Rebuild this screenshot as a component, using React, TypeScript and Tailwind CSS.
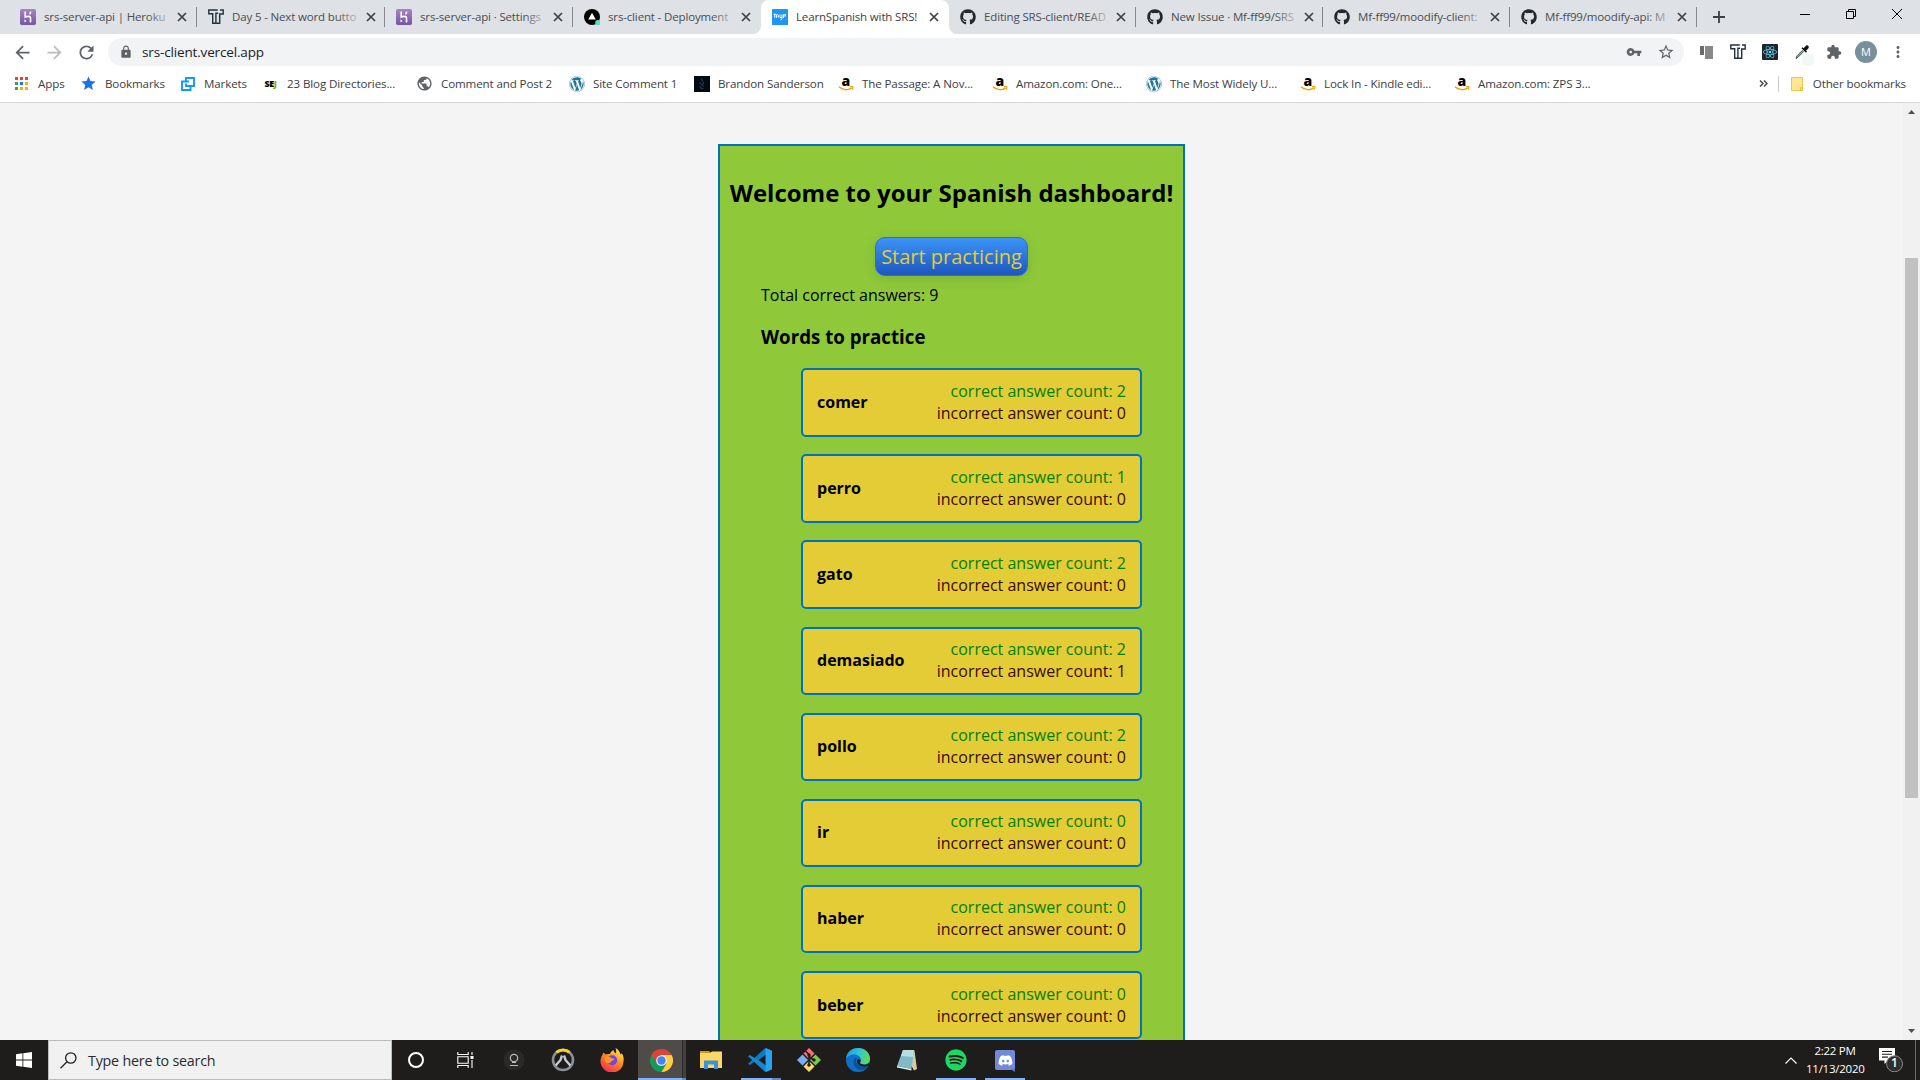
import React from "react";
import { FaGithub, FaWordpress, FaReact, FaSpotify, FaDiscord } from "react-icons/fa";
import {
  MdArrowBack,
  MdArrowForward,
  MdRefresh,
  MdLock,
  MdVpnKey,
  MdStarBorder,
  MdExtension,
  MdMoreVert,
  MdPublic,
  MdStar,
} from "react-icons/md";

/* ---------- small icons ---------- */

const Heroku = () => (
  <svg viewBox="0 0 16 16" className="size-4">
    <defs>
      <linearGradient id="hk" x1="0" y1="0" x2="0" y2="1">
        <stop offset="0" stopColor="#a585c4" />
        <stop offset="1" stopColor="#7a53a3" />
      </linearGradient>
    </defs>
    <rect width="16" height="16" rx="1.8" fill="url(#hk)" />
    <path d="M5.2 2.5v5.6c1.8-.8 5.3-1.5 5.3 1v4.4M10.6 2.6c0 1-.4 1.900-1 2.600" fill="none" stroke="#fff" strokeWidth="1.6" />
    <path d="M4.500 10.200l2 1.700-2 1.700z" fill="#fff" />
  </svg>
);

const Thinkful = () => (
  <svg viewBox="0 0 16 16" className="size-4" fill="none" stroke="#25303f" strokeWidth="1.400">
    <path d="M9.800 1H.8v3.800h3.900v9.500h3.200V4.200h2.200" />
    <path d="M12 1h3.200v4h-3.500v9.300H7.500" />
  </svg>
);

const Vercel = () => (
  <svg viewBox="0 0 16 16" className="size-4">
    <circle cx="8" cy="8" r="8" fill="#000" />
    <path d="M8 3.700l3.800 6.700H4.200z" fill="#fff" />
    <circle cx="13.800" cy="13.700" r="2.600" fill="#50e3c2" />
  </svg>
);

const Npr = () => (
  <svg viewBox="0 0 16 16" className="size-4">
    <rect width="16" height="16" rx=".6" fill="#2196f0" />
    <path d="M1.500 5.300h2.700M2.800 5.300v3.500M4.500 8.800V5.800c1-.8 1.800 0 1.800.8v2M8 5.500v3h1.800M10 5.500v4.300L8.500 11M11.500 9V5.500M11.500 5.800h2.700M13 5.800v2" fill="none" stroke="#fff" strokeWidth="1" />
  </svg>
);

const Close = () => (
  <svg viewBox="0 0 10 10" className="size-[10px] shrink-0" stroke="#3c4043" strokeWidth="1.700">
    <path d="M1 1l8 8M9 1l-8 8" />
  </svg>
);

const Git = () => <FaGithub className="size-4 text-[#24292e]" />;

/* ---------- tab strip ---------- */

type TabProps = { icon: React.ReactNode; title: string; active?: boolean; sep?: boolean; w?: string };

function Tab({ icon, title, active, sep, w = "w-[188px]" }: TabProps) {
  return (
    <div
      className={
        "relative flex h-[34px] shrink-0 items-center pl-[11px] pr-[10px] " + w + (active ? " rounded-t-lg bg-white" : "")
      }
    >
      <span className="shrink-0">{icon}</span>
      <span className="relative ml-2 h-5 flex-1">
        <span
          className={
            "block whitespace-nowrap text-[11.500px] leading-5 tracking-[-0.15px]" +
            (active ? " text-[#3c4043]" : " text-[#4a4d51]")
          }
        >
          {title}
        </span>
        {!active && <span className="absolute inset-y-0 -right-2 w-7 bg-gradient-to-r from-[#dee1e6]/0 to-[#dee1e6]" />}
      </span>
      <span className="ml-[10px]">
        <Close />
      </span>
      {sep && <span className="absolute right-0 top-[7px] h-5 w-px bg-[#85888c]" />}
      {active && (
        <>
          <svg viewBox="0 0 8 8" className="absolute -left-2 bottom-0 size-2" fill="#fff">
            <path d="M8 0v8H0a8 8 0 0 0 8-8z" />
          </svg>
          <svg viewBox="0 0 8 8" className="absolute -right-2 bottom-0 size-2" fill="#fff">
            <path d="M0 0v8h8a8 8 0 0 1-8-8z" />
          </svg>
        </>
      )}
    </div>
  );
}

function TabStrip() {
  return (
    <div className="flex h-[34px] bg-[#dee1e6]">
      <div className="ml-[9px] flex w-[1688px]">
        <Tab icon={<Heroku />} title="srs-server-api | Heroku" sep />
        <Tab icon={<Thinkful />} title="Day 5 - Next word butto" sep />
        <Tab icon={<Heroku />} title="srs-server-api · Settings" sep />
        <Tab icon={<Vercel />} title="srs-client - Deployment" />
        <Tab icon={<Npr />} title="LearnSpanish with SRS!" active />
        <Tab icon={<Git />} title="Editing SRS-client/READ" sep w="w-[187px]" />
        <Tab icon={<Git />} title="New Issue · Mf-ff99/SRS" sep w="w-[187px]" />
        <Tab icon={<Git />} title="Mf-ff99/moodify-client:" sep w="w-[187px]" />
        <Tab icon={<Git />} title="Mf-ff99/moodify-api: M" sep w="w-[187px]" />
      </div>
      <div className="flex flex-1 items-center justify-between pl-4 pr-[18px]">
        <svg viewBox="0 0 12 12" className="size-3" stroke="#3c4043" strokeWidth="1.800">
          <path d="M6 0v12M0 6h12" />
        </svg>
        <div className="mb-[6px] flex gap-9">
          <svg viewBox="0 0 10 10" className="size-[10px]" stroke="#000" strokeWidth="1">
            <path d="M0 5.500h10" />
          </svg>
          <svg viewBox="0 0 10 10" className="size-[10px]" stroke="#000" fill="none" strokeWidth="1">
            <path d="M.5 2.500h7v7h-7zM2.500 2.500v-2h7v7h-2" />
          </svg>
          <svg viewBox="0 0 10 10" className="size-[10px]" stroke="#000" strokeWidth="1">
            <path d="M0 0l10 10M10 0L0 10" />
          </svg>
        </div>
      </div>
    </div>
  );
}

/* ---------- toolbar ---------- */

const Slot = ({ children }: { children: React.ReactNode }) => (
  <span className="flex w-8 items-center justify-center">{children}</span>
);

function Toolbar() {
  return (
    <div className="flex h-9 items-center bg-white pl-[6px] pr-[6px] text-[#5f6368]">
      <Slot><MdArrowBack className="size-[21px]" /></Slot>
      <Slot><MdArrowForward className="size-[21px] text-[#babcbe]" /></Slot>
      <Slot><MdRefresh className="size-[21px]" /></Slot>
      <div className="ml-[6px] flex h-7 w-[1576px] items-center rounded-full bg-[#f1f3f4] pl-[11px] pr-[9px]">
        <MdLock className="size-[14px]" />
        <span className="ml-[9px] flex-1 text-[13.500px] tracking-[-0.15px] text-[#202124]">srs-client.vercel.app</span>
        <MdVpnKey className="mr-[15px] size-4" />
        <MdStarBorder className="size-[18px]" />
      </div>
      <div className="ml-[6px] flex items-center">
        <Slot>
          <span className="flex gap-px">
            <span className="h-[9px] w-1 bg-[#6b6b6b]" />
            <span className="h-[13px] w-2 bg-[#888]" />
          </span>
        </Slot>
        <Slot><Thinkful /></Slot>
        <Slot>
          <span className="flex size-4 items-center justify-center rounded-[1px] bg-[#20232a]">
            <FaReact className="size-[14px] text-[#61dafb]" />
          </span>
        </Slot>
        <Slot>
          <span className="relative">
            <svg viewBox="0 0 16 16" className="size-4">
              <path d="M2 14.500l.8-2.500L8.500 6.300l1.200 1.200L4 13.300z" fill="#8fa896" stroke="#2f4a38" strokeWidth=".8" />
              <path d="M7.500 4.200l4.500 4.500 1-1-1-1 2.500-2.500c1.200-1.500-1-3.700-2.500-2.500L9.500 4.200l-1-1z" fill="#111" />
            </svg>
            <span className="absolute -bottom-[6px] -right-1 size-3 rounded-sm bg-[#eff5f5]/80" />
          </span>
        </Slot>
        <Slot><MdExtension className="size-4" /></Slot>
        <Slot>
          <span className="flex size-[22px] items-center justify-center rounded-full bg-[#78909c] text-[11px] text-white">M</span>
        </Slot>
        <Slot><MdMoreVert className="size-[18px]" /></Slot>
      </div>
    </div>
  );
}

/* ---------- bookmarks ---------- */

const Amazon = () => (
  <svg viewBox="0 0 16 16" className="size-4">
    <text x="3.500" y="9.800" fontSize="14" fontWeight="800" fontFamily="Open Sans, sans-serif" fill="#000">a</text>
    <path d="M1 10.800c4 3.600 9 3.600 12.500 1" fill="none" stroke="#ff9900" strokeWidth="1.500" />
    <path d="M11.800 10.600l3.200-.1-.6 3" fill="none" stroke="#ff9900" strokeWidth="1" />
  </svg>
);
const Wp = () => <FaWordpress className="size-4 text-[#21759b]" />;

const AppsGrid = () => (
  <svg viewBox="0 0 13 13" className="size-[13px]">
    {["#ea4335", "#ea4335", "#ea4335", "#34a853", "#1a73e8", "#fbaf00", "#34a853", "#fbaf00", "#fbaf00"].map((c, i) => (
      <rect key={i} x={(i % 3) * 5} y={Math.floor(i / 3) * 5} width="3" height="3" fill={c} />
    ))}
  </svg>
);
const Markets = () => (
  <svg viewBox="0 0 14 14" className="size-[14px]" fill="none" stroke="#1199fa" strokeWidth="1.900">
    <path d="M8 4.500H1v8.500h8.500V8.500M5 4.500V1h8v8H5V6.500" />
  </svg>
);
const Sej = () => (
  <span className="text-[9px] font-extrabold leading-4 tracking-[-0.4px] text-black">
    SE<span className="text-[#6cb518]">J</span>
  </span>
);
const Brandon = () => (
  <svg viewBox="0 0 16 16" className="size-4">
    <rect width="16" height="16" fill="#020a14" />
    <path d="M8 2.500c-2 2.500 2.500 3 1.500 5.500M6 6c-1 2 3.500 2.500 3.500 4.500M6 10c0 2 2 3 3.500 2" fill="none" stroke="#2a3444" strokeWidth="1.300" />
  </svg>
);

const bookmarks: [React.ReactNode, string, string][] = [
  [<AppsGrid />, "Apps", "w-[67px]"],
  [<MdStar className="size-[17px] text-[#1a73e8]" />, "Bookmarks", "w-[99px]"],
  [<Markets />, "Markets", "w-[83px]"],
  [<Sej />, "23 Blog Directories...", "w-[154px]"],
  [<MdPublic className="size-[17px] text-[#5f6368]" />, "Comment and Post 2", "w-[152px]"],
  [<Wp />, "Site Comment 1", "w-[125px]"],
  [<Brandon />, "Brandon Sanderson", "w-[144px]"],
  [<Amazon />, "The Passage: A Nov...", "w-[154px]"],
  [<Amazon />, "Amazon.com: One...", "w-[154px]"],
  [<Wp />, "The Most Widely U...", "w-[154px]"],
  [<Amazon />, "Lock In - Kindle edi...", "w-[154px]"],
  [<Amazon />, "Amazon.com: ZPS 3...", "w-[154px]"],
];

function BookmarkBar() {
  return (
    <div className="flex h-[33px] items-center border-b border-[#d9dadc] bg-white pb-1 pl-[13px] pr-[14px] text-[11.600px] tracking-[-0.13px] text-[#3c4043]">
      {bookmarks.map(([icon, label, w]) => (
        <div key={label} className={"flex shrink-0 items-center whitespace-nowrap " + w}>
          <span className="flex w-[17px] items-center justify-center">{icon}</span>
          <span className="ml-2">{label}</span>
        </div>
      ))}
      <div className="flex flex-1 items-center justify-end whitespace-nowrap">
        <svg viewBox="0 0 9 7" className="size-[9px]" fill="none" stroke="#4a4d51" strokeWidth="1.500">
          <path d="M1 .5l3 3-3 3M5 .5l3 3-3 3" />
        </svg>
        <span className="ml-[10px] h-4 w-px bg-[#c8c9cb]" />
        <svg viewBox="0 0 12 14" className="ml-3 h-[14px] w-3">
          <path d="M.5.5h11v13H.5z" fill="#ffe694" stroke="#edc94f" />
          <path d="M9.500 10.500h2v3h-2z" fill="#ffe694" stroke="#e9bf3a" />
        </svg>
        <span className="ml-[10px]">Other bookmarks</span>
      </div>
    </div>
  );
}

/* ---------- page ---------- */

const words: [string, number, number][] = [
  ["comer", 2, 0],
  ["perro", 1, 0],
  ["gato", 2, 0],
  ["demasiado", 2, 1],
  ["pollo", 2, 0],
  ["ir", 0, 0],
  ["haber", 0, 0],
  ["beber", 0, 0],
];

function Page() {
  return (
    <div className="flex h-[937px] overflow-hidden bg-[#f4f4f4]">
      <main className="flex flex-1 justify-center overflow-hidden pt-[41px]">
        <section className="h-[1000px] w-[467px] shrink-0 border-2 border-[#0071bc] bg-[#8fc93a] px-2 pt-[30px] text-black">
          <h2 className="whitespace-nowrap text-center text-2xl font-bold leading-[33px]">Welcome to your Spanish dashboard!</h2>
          <div className="mt-7 flex justify-center">
            <button className="h-[39px] w-[153px] whitespace-nowrap rounded-[10px] border border-[#2a6bd4] bg-linear-to-b from-[#3d94f6] to-[#1e57c0] text-[20px] leading-none text-[#e4cc37] shadow-[0_3px_12px_rgba(60,90,20,0.2)]">
              Start practicing
            </button>
          </div>
          <p className="ml-[33px] mt-2 text-base leading-[22px]">Total correct answers: 9</p>
          <h3 className="ml-[33px] mt-[18px] text-[18.720px] font-bold leading-[26px]">Words to practice</h3>
          <ul className="ml-[73px] mt-[18.300px] flex w-[341px] flex-col gap-[17.700px]">
            {words.map(([w, c, i]) => (
              <li
                key={w}
                className="flex h-[68.400px] items-center justify-between rounded-[5px] border-2 border-[#0071bc] bg-[#e4cc37] px-[14px]"
              >
                <b className="-mt-px text-base leading-[22px]">{w}</b>
                <div className="-mt-px text-right text-base leading-[22px]">
                  <p className="text-[#008000]">correct answer count: {c}</p>
                  <p className="text-[#3b0a0a]">incorrect answer count: {i}</p>
                </div>
              </li>
            ))}
          </ul>
        </section>
      </main>
      <div className="flex w-[17px] flex-col items-center bg-[#f1f1f1]">
        <svg viewBox="0 0 7 4" className="mt-[7px] h-1 w-[7px]" fill="#505050"><path d="M0 4l3.500-4L7 4z" /></svg>
        <div className="mt-[144px] h-[540px] w-[13px] bg-[#c1c1c1]" />
        <svg viewBox="0 0 7 4" className="mb-[7px] mt-auto h-1 w-[7px]" fill="#505050"><path d="M0 0l3.500 4L7 0z" /></svg>
      </div>
    </div>
  );
}

/* ---------- taskbar ---------- */

const Firefox = () => (
  <svg viewBox="0 0 24 24" className="size-6">
    <defs>
      <linearGradient id="ff" x1=".8" y1="0" x2=".2" y2="1">
        <stop offset="0" stopColor="#fff04f" />
        <stop offset=".45" stopColor="#ff8a1e" />
        <stop offset="1" stopColor="#f0245e" />
      </linearGradient>
    </defs>
    <path d="M3 4.500C4.300 5 5 6 5.500 6.500 7 5.800 8.500 5.800 9.800 6 10.700 4 12 2.800 13.500 2c0 1.500 1 2.500 2.500 3.500.4-2 .2-3.800-.5-5.500 3 1.500 4.500 4 5 6.500.8-.2 1-.8 1.200-1.500C23.500 8 24 10.500 23.500 13.500A11.500 11.500 0 1 1 1.500 8.500C2.300 7.300 3 6.500 3 4.500z" fill="url(#ff)" />
    <circle cx="12.200" cy="12.300" r="5" fill="#7542e5" />
    <path d="M4.500 9.500c3-2 5.500-.5 7.500 1l2.500.2c-.5 2-3 1.600-3.500 3.300-1 1.500-5 1.500-5.500-.5z" fill="#ff9a1e" />
  </svg>
);

const Chrome = () => (
  <svg viewBox="0 0 24 24" className="size-[23px]">
    <path d="M12 12L1.600 6A12 12 0 0 0 12 24l5.200-9z" fill="#0f9d58" />
    <path d="M12 12l5.200 3L12 24A12 12 0 0 0 22.400 6H12z" fill="#ffcd40" />
    <path d="M12 6h10.400A12 12 0 0 0 1.600 6l5.200 9z" fill="#db4437" />
    <circle cx="12" cy="12" r="5.600" fill="#f1f1f1" />
    <circle cx="12" cy="12" r="4.400" fill="#4285f4" />
  </svg>
);

const Overwatch = () => (
  <svg viewBox="0 0 24 24" className="size-6" fill="none">
    <circle cx="12" cy="12" r="10" stroke="#8b9197" strokeWidth="2.600" />
    <path d="M5.500 4.400a10 10 0 0 1 13 0" stroke="#f7d518" strokeWidth="3" />
    <path d="M11 7.500L9.500 12l-4.800 5.500M13 7.500l1.500 4.500 4.800 5.500" stroke="#c9ccd0" strokeWidth="2.400" />
  </svg>
);

const Folder = () => (
  <svg viewBox="0 0 22 20" className="h-5 w-[22px]">
    <path d="M0 1h9l2 2h-11z" fill="#d8980c" />
    <path d="M0 3h10l2-1.500h10V18H0z" fill="#fdd667" />
    <path d="M4 19v-8.500h14V19h-4v-4.500H8V19z" fill="#3a93d8" />
  </svg>
);

const VsCode = () => (
  <svg viewBox="0 0 24 24" className="size-6">
    <path d="M17.500 0L24 2.800v18.400L17.500 24 6.500 13.500 2 17 0 15.800 14 3z" fill="#0b7cc4" />
    <path d="M2 7l-2 1.200L17.500 24V17z" fill="#1489d3" />
    <path d="M17.500 0L24 2.800v18.400L17.500 24z" fill="#27a3f0" />
    <path d="M17.500 6.800v10.400L10.600 12zM0 9.800v4.400L2.300 12z" fill="#201e1b" />
  </svg>
);

const GitBash = () => (
  <svg viewBox="0 0 24 24" className="size-6">
    <path d="M12 0l5.500 5.500L12 11 6.500 5.500z" fill="#f4716f" />
    <path d="M18.500 6.500L24 12l-5.500 5.500L13 12z" fill="#7ec850" />
    <path d="M12 13l5.500 5.500L12 24l-5.500-5.500z" fill="#fbdc6b" />
    <path d="M5.500 6.500L11 12l-5.500 5.500L0 12z" fill="#79aef6" />
    <path d="M8.500 3L12 6.500v11M12 8.500l4.500 3.500" fill="none" stroke="#211f1c" strokeWidth="1.600" />
    <circle cx="12" cy="7" r="1.700" fill="#211f1c" />
    <circle cx="12" cy="17" r="1.800" fill="#211f1c" />
    <circle cx="17" cy="12" r="1.700" fill="#211f1c" />
  </svg>
);

const Edge = () => (
  <svg viewBox="0 0 24 24" className="size-6">
    <defs>
      <linearGradient id="eg" x1="0" y1=".3" x2="1" y2=".5">
        <stop offset="0" stopColor="#1b9de2" />
        <stop offset=".5" stopColor="#2fc4d8" />
        <stop offset="1" stopColor="#62dc54" />
      </linearGradient>
    </defs>
    <circle cx="12" cy="12" r="12" fill="#1170c4" />
    <path d="M0 11C.5 4.500 5.500 0 12 0c7 0 12 5 12 10.500 0 4-3 6-6 6-2.500 0-4.500-.8-4-2 .6-.8 1-1.600 1-2.500C15 9 12 6.500 8.500 6.500 4.500 6.500 1 8.500 0 11z" fill="url(#eg)" />
    <path d="M9 10c-3 3.500-1.500 10.500 5 12 3 .5 6.500-1.500 8-4-5 2.500-12 0-12-5 0-1 .3-2 .8-2.800z" fill="#0c4f9c" />
    <path d="M13.800 14.600c-.2 1.500 5.500 3.500 9.300.4l.9 1.500-2 1.600c-5 2-11-.5-11-4.500 0-1 .5-2 1.300-2.500 1 .3 2.700 1 2.500 1.800z" fill="#201e1b" />
  </svg>
);

const Notepad = () => (
  <svg viewBox="0 0 24 24" className="size-6">
    <path d="M7.500 2l12 .5L22 21l-3 1.500z" fill="#d6c9a8" />
    <path d="M8 2h11l-2.500 19L2 18z" fill="#7fbac6" />
    <path d="M8 2h11l-1 7-12-1z" fill="#b8dde3" />
    <path d="M2 18l14.500 3-.2 1.500L2 19.500z" fill="#eef4f5" />
  </svg>
);

type TaskProps = { children: React.ReactNode; bar?: string; second?: string; active?: boolean };
function Task({ children, bar, second, active }: TaskProps) {
  return (
    <div className={"relative mr-px flex h-10 w-12 items-center justify-center " + (active ? "bg-[#4e4b48]" : "")}>
      {children}
      {active && <span className="absolute inset-y-0 right-0 w-1 border-l border-[#2b2a28] bg-[#43413f]" />}
      {bar && <span className={"absolute bottom-0 h-0.5 bg-[#7ab5f9] " + bar} />}
      {second && <span className={"absolute bottom-0 h-0.5 bg-[#5f8cbf] " + second} />}
    </div>
  );
}

function Taskbar() {
  return (
    <div className="flex h-10 bg-[#1f1d1b] text-white">
      <div className="flex w-12 items-center justify-center">
        <svg viewBox="0 0 16 16" className="size-4" fill="#fff">
          <path d="M0 2.200L6.500 1.300v6.300H0zM7.300 1.200L16 0v7.600H7.300zM0 8.400h6.500v6.300L0 13.800zM7.300 8.400H16V16l-8.700-1.200z" />
        </svg>
      </div>
      <div className="flex w-[344px] items-center border border-[#bdbdbd] bg-[#f1f1f1] pl-[11px] text-[#2b2b2b]">
        <svg viewBox="0 0 17 17" className="size-[17px]" fill="none" stroke="#222" strokeWidth="1.300">
          <circle cx="10.800" cy="6" r="5.200" />
          <path d="M7 9.800L.5 16.300" />
        </svg>
        <span className="ml-[11px] mt-0.5 text-[14.300px] tracking-[-0.220px]">Type here to search</span>
      </div>
      <div className="flex">
        <Task>
          <span className="size-4 rounded-full border-[2.500px] border-white" />
        </Task>
        <Task>
          <svg viewBox="0 0 17 16" className="h-4 w-[17px]" fill="none" stroke="#fff" strokeWidth="1.100">
            <path d="M.8 0v2.500h10.400V0M.8 16v-2.500h10.400V16M.8 4.700h10.400v6.600H.8zM15 0v3M15 8v8" />
            <path d="M13.500 4h3v3h-3z" fill="#fff" stroke="none" />
          </svg>
        </Task>
        <Task>
          <svg viewBox="0 0 22 22" className="size-[22px]" fill="none" stroke="#bbb" strokeWidth="1.200">
            <circle cx="11" cy="11" r="10.500" fill="#2a2928" stroke="none" />
            <circle cx="11" cy="9" r="3.700" />
            <path d="M7 16.500h8M9 13.300h4" />
          </svg>
        </Task>
        <Task><Overwatch /></Task>
        <Task><Firefox /></Task>
        <div className="w-px" />
        <Task active bar="left-0 right-[4px]" second="right-0 w-1">
          <span className="mr-px"><Chrome /></span>
        </Task>
        <Task><Folder /></Task>
        <Task bar="left-[5px] w-[31px]" second="left-9 w-[9px]"><VsCode /></Task>
        <Task><GitBash /></Task>
        <Task><Edge /></Task>
        <Task><Notepad /></Task>
        <Task bar="inset-x-1">
          <FaSpotify className="size-[22px] rounded-full bg-[#1c1a19] text-[#1ed760]" />
        </Task>
        <Task bar="inset-x-1">
          <span className="relative flex size-5 items-center justify-center rounded-[2px] bg-[#7289da]">
            <FaDiscord className="size-[15px]" />
            <svg viewBox="0 0 5 3" className="absolute -bottom-[2px] right-0 h-[3px] w-[5px]" fill="#5b70c0">
              <path d="M0 0h5v3z" />
            </svg>
          </span>
        </Task>
      </div>
      <div className="ml-auto flex items-center">
        <svg viewBox="0 0 12 7" className="mr-[9px] h-[7px] w-3" fill="none" stroke="#fff" strokeWidth="1.200">
          <path d="M.5 6.500L6 1l5.500 5.500" />
        </svg>
        <div className="mb-px w-[58px] whitespace-nowrap text-center text-[11.500px] leading-[18px] tracking-[-0.250px]">
          <p>2:22 PM</p>
          <p>11/13/2020</p>
        </div>
        <div className="relative ml-[15px] mr-[12px] h-6 w-6">
          <svg viewBox="0 0 24 24" className="size-6">
            <path d="M0 0h16v12.500H9L5.500 16v-3.500H0z" fill="#fff" />
            <path d="M3 3.500h10M3 6.300h10M3 9.100h6" stroke="#1f1d1b" strokeWidth="1.100" />
            <circle cx="15.500" cy="15.800" r="8" fill="#302f2e" stroke="#8a8a8a" strokeWidth="1" />
          </svg>
          <span className="absolute left-[12px] top-[7px] text-[12px] font-semibold leading-4">1</span>
        </div>
        <div className="h-10 w-[5px] border-l border-[#6b6a69]" />
      </div>
    </div>
  );
}

export default function App() {
  return (
    <div className="h-[1080px] w-[1920px] overflow-hidden font-['Open_Sans',sans-serif]">
      <TabStrip />
      <Toolbar />
      <BookmarkBar />
      <Page />
      <Taskbar />
    </div>
  );
}
